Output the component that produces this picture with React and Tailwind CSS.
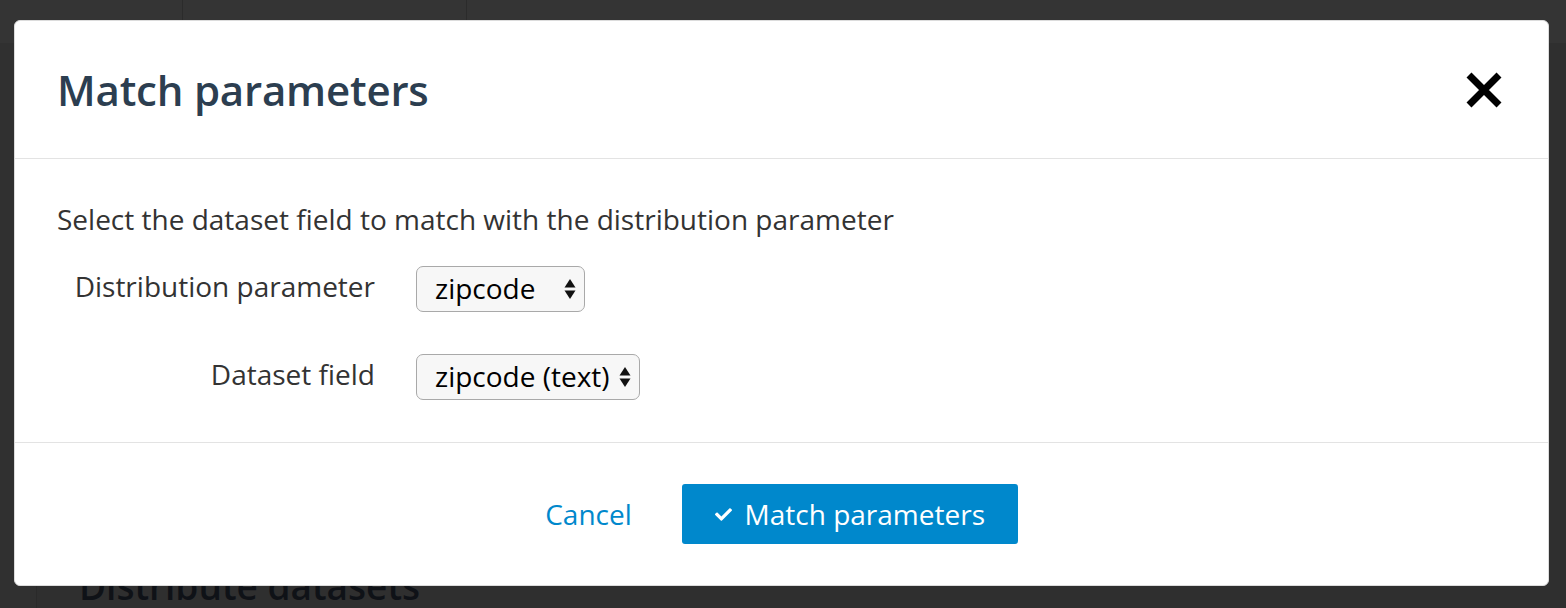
import { FaCheck } from "react-icons/fa";

const Arrows = () => (
  <svg width="12" height="24" viewBox="0 0 12 24" className="shrink-0">
    <path d="M6 2 L11.5 10.5 L0.5 10.5 Z" fill="#111" />
    <path d="M6 22 L11.5 13.5 L0.5 13.5 Z" fill="#111" />
  </svg>
);

const FakeSelect = ({ value, width }) => (
  <div
    className={`flex h-[46px] items-center justify-between rounded-[7px] border border-[#a9a9a9] bg-[#f7f7f7] pl-[18px] pr-[8px] text-[28px] text-black ${width}`}
  >
    <span className="-mt-[2px] leading-none">{value}</span>
    <Arrows />
  </div>
);

const App = () => {
  return (
    <div
      className="relative h-[608px] w-[1566px] overflow-hidden bg-[#2f2f2f]"
      style={{ fontFamily: "'Open Sans', 'Noto Sans', sans-serif" }}
    >
      {/* page behind the overlay */}
      <div className="flex h-[43px] bg-[#343434]">
        <div className="w-[183px] border-r border-[#2b2b2b]" />
        <div className="w-[284px] border-r border-[#2b2b2b]" />
        <div className="flex-1" />
      </div>
      <div className="flex h-[565px]">
        <div className="w-[37px] border-r border-[#2a2a2a] bg-[#303030]" />
        <div className="flex flex-1 flex-col justify-end pb-[4px] pl-[42px]">
          <h2 className="text-[37px] font-semibold leading-none text-[#0f1217]">
            Distribute datasets
          </h2>
        </div>
      </div>

      {/* modal */}
      <div className="absolute left-[14px] top-[20px] flex h-[566px] w-[1535px] flex-col rounded-[6px] border border-[#dcdcdc] bg-white">
        <div className="flex h-[138px] shrink-0 items-center justify-between border-b border-[#e3e3e3] pl-[42px] pr-[46px]">
          <h1 className="text-[42px] font-semibold tracking-[-0.2px] text-[#2c3e50]">
            Match parameters
          </h1>
          <svg width="36" height="36" viewBox="0 0 36 36">
            <path d="M3 3 L33 33 M33 3 L3 33" stroke="#000" strokeWidth="7" />
          </svg>
        </div>

        <div className="h-[284px] shrink-0 border-b border-[#e3e3e3] pl-[42px] pt-[41px]">
          <p className="text-[28px] leading-[38px] text-[#333]">
            Select the dataset field to match with the distribution parameter
          </p>
          <div className="mt-[28px] grid grid-cols-[318px_auto] items-center justify-start gap-x-[41px] gap-y-[42px]">
            <label className="-mt-[7px] text-right text-[28px] leading-none text-[#333]">
              Distribution parameter
            </label>
            <FakeSelect value="zipcode" width="w-[169px]" />
            <label className="-mt-[7px] text-right text-[28px] leading-none text-[#333]">
              Dataset field
            </label>
            <FakeSelect value="zipcode (text)" width="w-[224px]" />
          </div>
        </div>

        <div className="flex flex-1 items-center justify-center gap-[50px]">
          <button className="text-[28px] text-[#0088cc]">Cancel</button>
          <button className="flex h-[60px] w-[336px] items-center justify-center gap-[13px] rounded-[3px] bg-[#0088cc] text-[28px] text-white">
            <FaCheck className="text-[17px]" />
            <span>Match parameters</span>
          </button>
        </div>
      </div>
    </div>
  );
};

export default App;
